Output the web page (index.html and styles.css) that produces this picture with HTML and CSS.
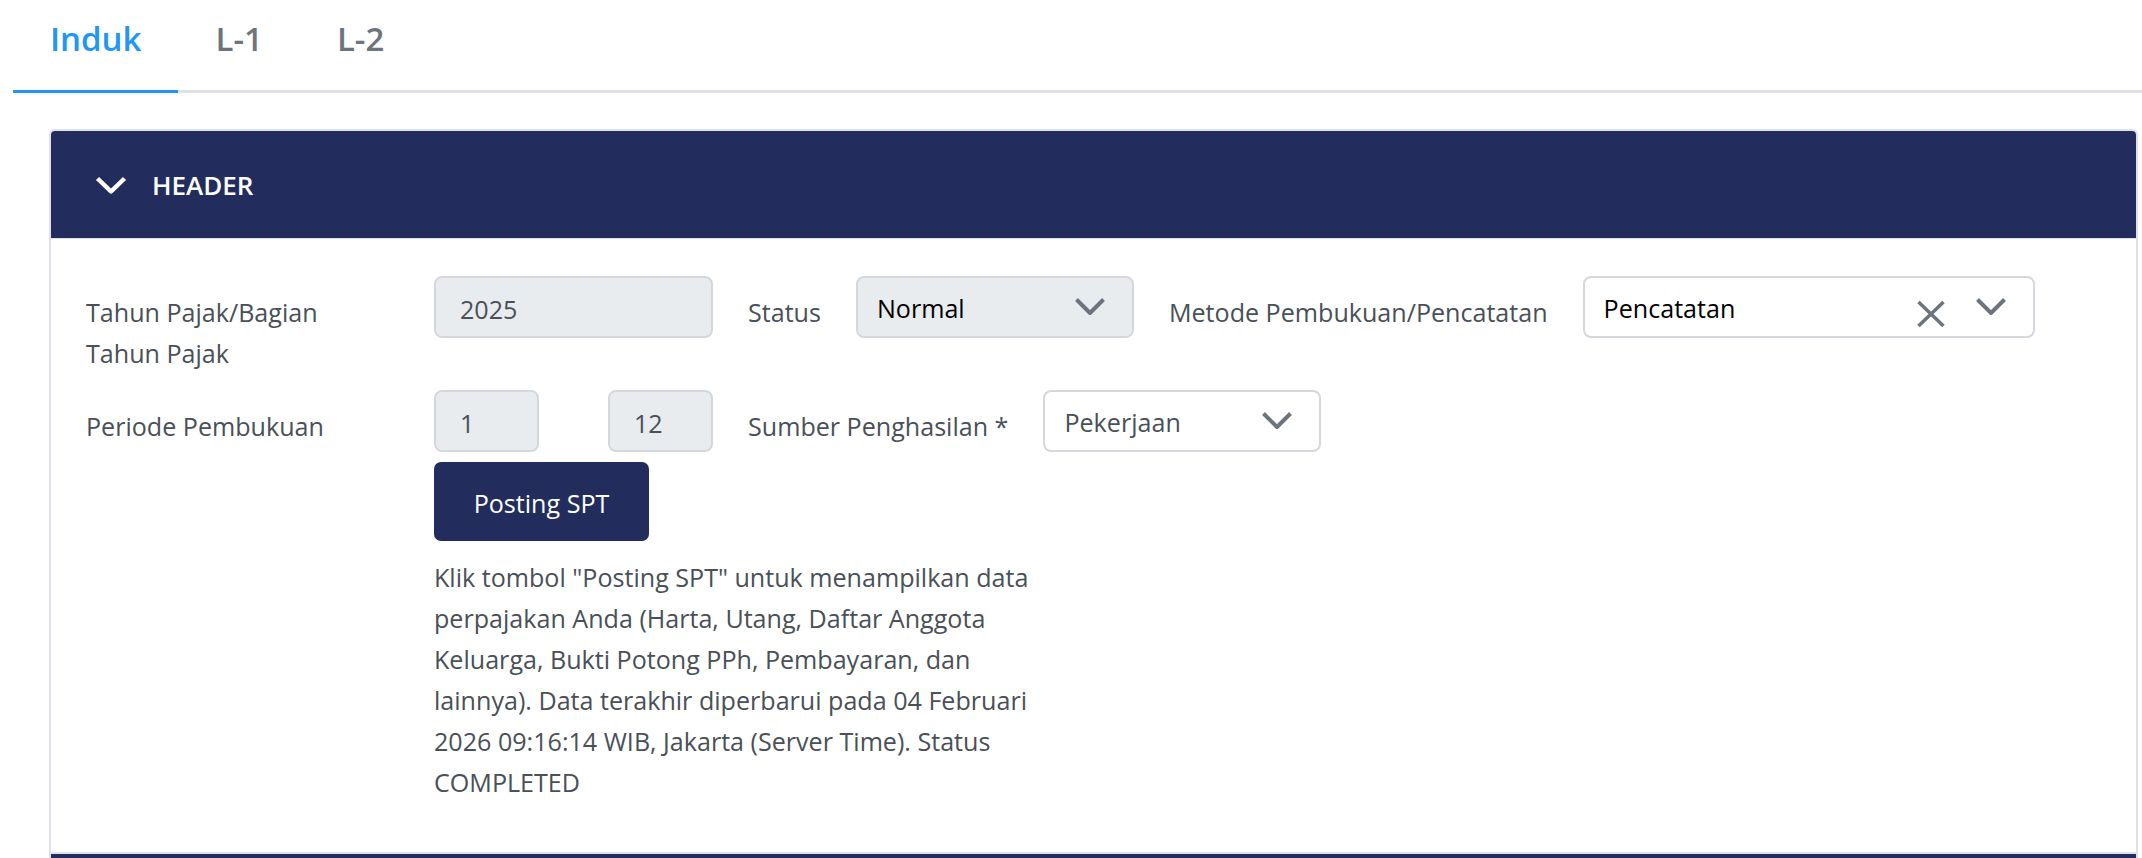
FILE: index.html
```html
<!DOCTYPE html>
<html lang="id">

<head>
    <meta charset="UTF-8">
    <meta name="viewport" content="width=device-width, initial-scale=1.0">
    <title>SPT Induk</title>
    <link rel="stylesheet" href="styles.css">
</head>

<body>
    <nav class="tabs">
        <a href="#" class="tab active">Induk</a>
        <a href="#" class="tab">L-1</a>
        <a href="#" class="tab">L-2</a>
    </nav>

    <div class="accordion">
        <div class="acc-item">
            <div class="acc-header">
                <svg class="acc-chevron" width="32" height="18" viewBox="0 0 32 18">
                    <path d="M2.5 2.5 L16 15.5 L29.5 2.5" fill="none" stroke="#fff" stroke-width="4.5" stroke-linejoin="round" />
                </svg>
                <span>HEADER</span>
            </div>
            <div class="acc-body">
                <div class="form-row">
                    <label class="form-label">Tahun Pajak/Bagian Tahun Pajak</label>
                    <div>
                        <input class="input" type="text" value="2025" readonly>
                    </div>
                    <div class="inline-fields">
                        <span class="inline-label">Status</span>
                        <div class="select disabled status-select">
                            <span class="value">Normal</span>
                            <svg class="caret" width="32" height="19" viewBox="0 0 32 19">
                                <path d="M2.5 2.5 L16 16 L29.5 2.5" fill="none" stroke="#6c757d" stroke-width="4" stroke-linejoin="round" />
                            </svg>
                        </div>
                        <span class="inline-label">Metode Pembukuan/Pencatatan</span>
                        <div class="select metode-select">
                            <span class="value">Pencatatan</span>
                            <svg class="clear" width="30" height="28" viewBox="0 0 30 28">
                                <path d="M2.5 2 L27.5 26 M27.5 2 L2.5 26" fill="none" stroke="#6c757d" stroke-width="3.5" />
                            </svg>
                            <svg class="caret" width="32" height="19" viewBox="0 0 32 19">
                                <path d="M2.5 2.5 L16 16 L29.5 2.5" fill="none" stroke="#6c757d" stroke-width="4" stroke-linejoin="round" />
                            </svg>
                        </div>
                    </div>
                </div>

                <div class="form-row">
                    <label class="form-label">Periode Pembukuan</label>
                    <div class="field-pair">
                        <input class="input small" type="text" value="1" readonly>
                        <input class="input small" type="text" value="12" readonly>
                    </div>
                    <div class="inline-fields">
                        <span class="inline-label">Sumber Penghasilan *</span>
                        <div class="select sumber-select">
                            <span class="value muted">Pekerjaan</span>
                            <svg class="caret" width="32" height="19" viewBox="0 0 32 19">
                                <path d="M2.5 2.5 L16 16 L29.5 2.5" fill="none" stroke="#6c757d" stroke-width="4" stroke-linejoin="round" />
                            </svg>
                        </div>
                    </div>
                </div>

                <div class="form-row posting-row">
                    <div></div>
                    <div class="posting">
                        <button class="btn-posting">Posting SPT</button>
                        <p class="posting-info">Klik tombol "Posting SPT" untuk menampilkan data perpajakan Anda (Harta, Utang, Daftar Anggota Keluarga, Bukti Potong PPh, Pembayaran, dan lainnya). Data terakhir diperbarui pada 04 Februari 2026 09:16:14 WIB, Jakarta (Server Time). Status COMPLETED</p>
                    </div>
                </div>
            </div>
        </div>
        <div class="acc-item">
            <div class="acc-header next"></div>
        </div>
    </div>
</body>

</html>
```

FILE: styles.css
```css
body {
    margin: 0;
    background-color: #fff;
    color: #495057;
    font-family: "Open Sans", Arial, sans-serif;
    font-size: 25.1px;
}

.tabs {
    display: flex;
    margin-left: 13px;
    border-bottom: 3px solid #dee2e6;
}

.tab {
    padding: 19px 37px 31px;
    margin-bottom: -3px;
    font-size: 33px;
    font-weight: 600;
    line-height: 40px;
    color: #6c757d;
    text-decoration: none;
    border-bottom: 3px solid #dee2e6;
}

.tab.active {
    color: #2196f3;
    border-bottom-color: #2196f3;
}

.accordion {
    margin: 36px 4px 0 49px;
    border: 2px solid #dee2e6;
    border-bottom: none;
    border-radius: 6px 6px 0 0;
    overflow: hidden;
}

.acc-header {
    display: flex;
    align-items: center;
    gap: 25px;
    height: 107px;
    padding-left: 44px;
    background-color: #222d5e;
    color: #fff;
    font-size: 26px;
    font-weight: 600;
    border-bottom: 1px solid #dee2e6;
}

.acc-header.next {
    border-top: 2px solid #dee2e6;
}

.acc-body {
    padding: 37px 36px 49px 35px;
}

.form-row {
    display: grid;
    grid-template-columns: 313px 279px 1fr;
    column-gap: 35px;
    align-items: start;
}

.form-row + .form-row {
    margin-top: 16px;
}

.form-row.posting-row {
    margin-top: 10px;
}

.form-label {
    padding: 16px 50px 0 0;
    line-height: 41px;
}

.inline-fields {
    display: flex;
    align-items: flex-start;
    gap: 35px;
}

.inline-label {
    padding-top: 16px;
    line-height: 41px;
    white-space: nowrap;
}

.input {
    box-sizing: border-box;
    width: 100%;
    height: 62px;
    padding: 4px 24px 0;
    border: 2px solid #d4d8dd;
    border-radius: 8px;
    background-color: #e9ecef;
    color: #495057;
    font-family: inherit;
    font-size: 25.1px;
    outline: none;
}

.field-pair {
    display: flex;
    justify-content: space-between;
}

.input.small {
    width: 105px;
}

.select {
    box-sizing: border-box;
    display: flex;
    align-items: center;
    height: 62px;
    padding: 0 26px 0 19px;
    border: 2px solid #d4d8dd;
    border-radius: 8px;
    background-color: #fff;
}

.select.disabled {
    background-color: #e9ecef;
}

.select .value {
    flex: 1;
    padding-top: 2px;
    color: #000;
    white-space: nowrap;
}

.select .value.muted {
    color: #495057;
}

.status-select,
.sumber-select {
    width: 278px;
}

.metode-select {
    width: 452px;
}

.caret {
    margin-bottom: 2px;
}

.clear {
    margin: 14px 29px 0 0;
}

.btn-posting {
    width: 215px;
    height: 79px;
    padding-top: 4px;
    border: none;
    border-radius: 7px;
    background-color: #222d5e;
    color: #fff;
    font-family: inherit;
    font-size: 25.1px;
}

.posting {
    grid-column: 2 / 4;
}

.posting-info {
    max-width: 618px;
    margin: 16px 0 0;
    line-height: 41px;
}
```
